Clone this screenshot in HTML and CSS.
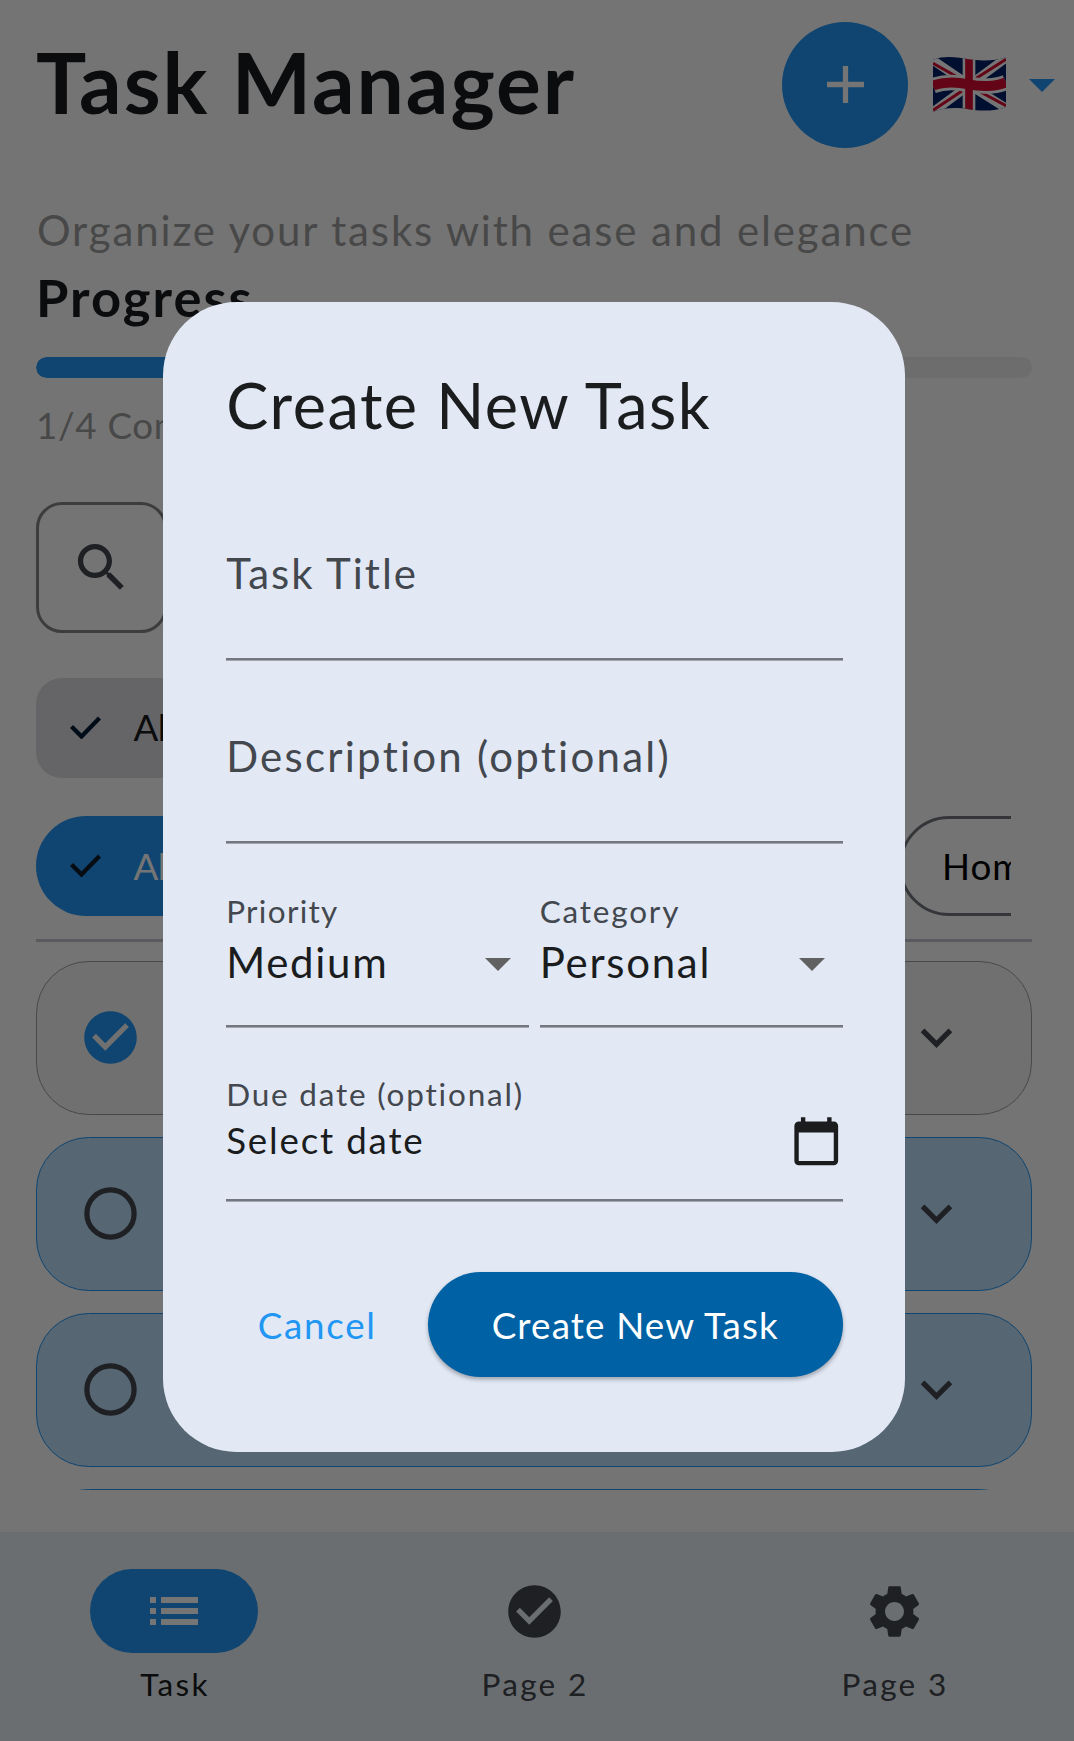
FILE: index.html
```html
<!DOCTYPE html>
<html lang="en">
<head>
<meta charset="utf-8">
<title>Task Manager</title>
<link rel="stylesheet" href="styles.css">
</head>
<body>
<div class="app">
  <header class="header">
    <h1 class="app-title">Task Manager</h1>
    <button class="fab" aria-label="Add task">
      <svg width="37" height="37" viewBox="0 0 14 14"><path d="M6 0h2v6h6v2H8v6H6V8H0V6h6z" fill="#fff"/></svg>
    </button>
    <svg class="flag" width="73" height="55" viewBox="53 36 219 165">
      <defs><clipPath id="wave"><path d="M53 44C90 30 130 38 160 43S240 49 272 37V186C240 200 190 198 160 193S90 186 53 201Z"/></clipPath></defs>
      <g clip-path="url(#wave)" fill="none">
        <rect x="53" y="30" width="219" height="175" fill="#012169"/>
        <path d="M50 44L162 120L276 192M276 36L162 120L50 203" stroke="#fff" stroke-width="27"/>
        <path d="M53 55L142 105M272 43L178 103M53 196L140 138M272 182L190 138" stroke="#d80d33" stroke-width="9"/>
        <path d="M53 122C90 108 130 112 160 118S240 127 272 112" stroke="#fff" stroke-width="47"/>
        <path d="M161 30V205" stroke="#fff" stroke-width="38"/>
        <path d="M53 122C90 108 130 112 160 118S240 127 272 112" stroke="#d80d33" stroke-width="30"/>
        <path d="M161 30V205" stroke="#d80d33" stroke-width="23"/>
      </g>
    </svg>
    <svg class="lang-arrow" width="26" height="13" viewBox="0 0 10 5"><path d="M0 0l5 5 5-5z" fill="#2196f3"/></svg>
  </header>

  <main class="main">
    <p class="subtitle">Organize your tasks with ease and elegance</p>
    <h2 class="progress-title">Progress</h2>
    <div class="track"><div class="track-fill" style="width:25%"></div></div>
    <p class="progress-note">1/4 Completed</p>
    <div class="search">
      <svg width="63" height="63" viewBox="0 0 24 24" fill="#43474e"><path d="M15.5 14h-.79l-.28-.27C15.41 12.59 16 11.11 16 9.5 16 5.91 13.09 3 9.5 3S3 5.91 3 9.5 5.91 16 9.5 16c1.61 0 3.09-.59 4.23-1.57l.27.28v.79l5 4.99L20.49 19l-4.99-5zm-6 0C7.01 14 5 11.99 5 9.5S7.01 5 9.5 5 14 7.01 14 9.5 11.99 14 9.5 14z"/></svg>
    </div>
    <div class="chips chips-status">
      <div class="chip chip-soft">
        <svg width="31" height="23" viewBox="0 0 31 23"><path d="M1.5 10.5L11.5 20.5L29.5 2" fill="none" stroke="#001d36" stroke-width="4.3"/></svg>
        <span>All</span>
      </div>
    </div>
    <div class="chips chips-category">
      <div class="chip chip-active">
        <svg width="31" height="23" viewBox="0 0 31 23"><path d="M1.5 10.5L11.5 20.5L29.5 2" fill="none" stroke="#101c2b" stroke-width="4.3"/></svg>
        <span>All</span>
      </div>
      <div class="chip chip-outline"><span>Home</span></div>
    </div>
    <hr class="divider">
    <ul class="tasks">
      <li class="task task-done">
        <svg width="63" height="63" viewBox="0 0 24 24" fill="#2196f3"><path d="M12 2C6.48 2 2 6.48 2 12s4.48 10 10 10 10-4.48 10-10S17.52 2 12 2zm-2 15l-5-5 1.41-1.41L10 14.17l7.59-7.59L19 8l-9 9z"/></svg>
        <svg width="63" height="63" viewBox="0 0 24 24" fill="#43474e"><path d="M16.59 8.59L12 13.17 7.41 8.59 6 10l6 6 6-6z"/></svg>
      </li>
      <li class="task">
        <svg width="63" height="63" viewBox="0 0 24 24"><circle cx="12" cy="12" r="9" fill="none" stroke="#43474e" stroke-width="2"/></svg>
        <svg width="63" height="63" viewBox="0 0 24 24" fill="#43474e"><path d="M16.59 8.59L12 13.17 7.41 8.59 6 10l6 6 6-6z"/></svg>
      </li>
      <li class="task">
        <svg width="63" height="63" viewBox="0 0 24 24"><circle cx="12" cy="12" r="9" fill="none" stroke="#43474e" stroke-width="2"/></svg>
        <svg width="63" height="63" viewBox="0 0 24 24" fill="#43474e"><path d="M16.59 8.59L12 13.17 7.41 8.59 6 10l6 6 6-6z"/></svg>
      </li>
      <li class="task"></li>
    </ul>
  </main>

  <nav class="nav">
    <a class="nav-item nav-current">
      <span class="nav-icon"><svg width="48" height="28" viewBox="0 0 48 28" fill="#fff"><path d="M0 0h6v6H0zM11 0h37v6H11zM0 11h6v6H0zM11 11h37v6H11zM0 22h6v6H0zM11 22h37v6H11z"/></svg></span>
      <span class="nav-label">Task</span>
    </a>
    <a class="nav-item">
      <span class="nav-icon"><svg width="63" height="63" viewBox="0 0 24 24" fill="#43474e"><path d="M12 2C6.48 2 2 6.48 2 12s4.48 10 10 10 10-4.48 10-10S17.52 2 12 2zm-2 15l-5-5 1.41-1.41L10 14.17l7.59-7.59L19 8l-9 9z"/></svg></span>
      <span class="nav-label">Page 2</span>
    </a>
    <a class="nav-item">
      <span class="nav-icon"><svg width="63" height="63" viewBox="0 0 24 24" fill="#43474e"><path d="M19.14 12.94c.04-.3.06-.61.06-.94 0-.32-.02-.64-.07-.94l2.03-1.58c.18-.14.23-.41.12-.61l-1.92-3.32c-.12-.22-.37-.29-.59-.22l-2.39.96c-.5-.38-1.03-.7-1.62-.94l-.36-2.54c-.04-.24-.24-.41-.48-.41h-3.84c-.24 0-.43.17-.47.41l-.36 2.54c-.59.24-1.13.57-1.62.94l-2.39-.96c-.22-.08-.47 0-.59.22L2.74 8.87c-.12.21-.08.47.12.61l2.03 1.58c-.05.3-.09.63-.09.94s.02.64.07.94l-2.03 1.58c-.18.14-.23.41-.12.61l1.92 3.32c.12.22.37.29.59.22l2.39-.96c.5.38 1.03.7 1.62.94l.36 2.54c.05.24.24.41.48.41h3.84c.24 0 .44-.17.47-.41l.36-2.54c.59-.24 1.13-.56 1.62-.94l2.39.96c.22.08.47 0 .59-.22l1.92-3.32c.12-.22.07-.47-.12-.61l-2.01-1.58zM12 15.6c-1.98 0-3.6-1.62-3.6-3.6s1.62-3.6 3.6-3.6 3.6 1.62 3.6 3.6-1.62 3.6-3.6 3.6z"/></svg></span>
      <span class="nav-label">Page 3</span>
    </a>
  </nav>
</div>

<div class="scrim">
  <section class="dialog" role="dialog" aria-modal="true">
    <h2 class="dialog-title">Create New Task</h2>
    <div class="field field-empty"><span class="placeholder">Task Title</span></div>
    <div class="field field-empty"><span class="placeholder placeholder-long">Description (optional)</span></div>
    <div class="field-row">
      <div class="field field-select">
        <span class="label label-priority">Priority</span>
        <div class="value"><span class="value-text">Medium</span><svg width="26" height="13" viewBox="0 0 10 5"><path d="M0 0l5 5 5-5z" fill="#616161"/></svg></div>
      </div>
      <div class="field field-select">
        <span class="label">Category</span>
        <div class="value"><span class="value-text">Personal</span><svg width="26" height="13" viewBox="0 0 10 5"><path d="M0 0l5 5 5-5z" fill="#616161"/></svg></div>
      </div>
    </div>
    <div class="field field-date">
      <div class="date-text">
        <span class="label">Due date (optional)</span>
        <span class="date-value">Select date</span>
      </div>
      <svg width="52.5" height="52.5" viewBox="0 0 24 24" fill="#1a1c1e"><path d="M20 3h-1V1h-2v2H7V1H5v2H4c-1.1 0-2 .9-2 2v16c0 1.1.9 2 2 2h16c1.1 0 2-.9 2-2V5c0-1.1-.9-2-2-2zm0 18H4V8h16v13z"/></svg>
    </div>
    <div class="actions">
      <button class="btn btn-text">Cancel</button>
      <button class="btn btn-filled">Create New Task</button>
    </div>
  </section>
</div>
</body>
</html>
```
FILE: styles.css
```css
* { box-sizing: border-box; margin: 0; padding: 0; }

body {
  width: 1074px;
  height: 1741px;
  overflow: hidden;
  position: relative;
  background: #fdfdfd;
  color: #191c20;
  font-family: Lato, "Open Sans", sans-serif;
}

svg { display: block; flex: none; }
button { border: 0; font: inherit; }

.app { height: 1741px; display: flex; flex-direction: column; }

/* Header */
.header {
  width: 1068px;
  height: 169px;
  padding: 0 13px 0 36px;
  display: flex;
  align-items: center;
}
.app-title {
  flex: 1;
  padding-bottom: 5px;
  font-size: 84px;
  line-height: 100px;
  font-weight: 700;
  letter-spacing: 1.95px;
}
.fab {
  width: 126px;
  height: 126px;
  border-radius: 50%;
  background: #2196f3;
  display: grid;
  place-items: center;
  margin-right: 24.5px;
}
.flag { margin-right: 23.5px; }
.lang-arrow { margin-top: 2px; }

/* Main column */
.main {
  width: 1068px;
  height: 1363px;
  padding: 34px 36px 0;
  display: flex;
  flex-direction: column;
}
.subtitle { font-size: 42px; line-height: 55px; letter-spacing: 1.86px; color: #9e9e9e; padding-left: 1px; }
.progress-title { margin-top: 6px; font-size: 52.5px; line-height: 66px; font-weight: 700; letter-spacing: 2px; }
.track { margin-top: 27px; height: 21px; flex: none; border-radius: 10.5px; background: #eeeeee; overflow: hidden; }
.track-fill { height: 100%; border-radius: 10.5px; background: #2196f3; }
.progress-note { margin-top: 23px; font-size: 36.75px; line-height: 48px; letter-spacing: 0.7px; color: #9e9e9e; }

.search {
  margin-top: 53px;
  width: 131px;
  height: 131px;
  flex: none;
  border: 3px solid #858585;
  border-radius: 26px;
  padding: 31px;
}

.chips { display: flex; flex: none; height: 100px; width: 975px; overflow: hidden; }
.chips-status { margin-top: 44.5px; }
.chips-category { margin-top: 38.5px; }
.chip {
  flex: none;
  height: 100px;
  display: flex;
  align-items: center;
  gap: 32.5px;
  padding: 0 44px 1px 34px;
  font-size: 36.75px;
  letter-spacing: 1px;
  line-height: 44px;
}
.chip-soft { width: 220px; border-radius: 26px; background: #dcdce1; letter-spacing: -0.6px; }
.chip-active { width: 220px; border-radius: 50px; background: #2196f3; color: #fff; margin-right: 643px; letter-spacing: -0.6px; }
.chip-outline { width: 190px; border-radius: 50px; border: 3px solid #73777f; color: #000; padding-left: 40px; }

.divider { margin-top: 22.5px; border: 0; height: 3px; flex: none; background: #c3c6cf; }

.tasks {
  margin-top: 19px;
  height: 529px;
  flex: none;
  overflow: hidden;
  list-style: none;
  display: flex;
  flex-direction: column;
  gap: 21.5px;
}
.task {
  flex: none;
  height: 154.5px;
  border: 1.3px solid #2196f3;
  border-radius: 52.5px;
  background: #bbdefb;
  padding: 0 63px 0 42px;
  display: flex;
  align-items: center;
  justify-content: space-between;
}
.task-done { background: #f4f4f4; border-color: #9e9e9e; }

/* Bottom navigation */
.nav {
  height: 209px;
  padding: 37px 6px 0 0;
  background: #e7eff5;
  display: grid;
  grid-template-columns: repeat(3, 360px);
  justify-content: center;
}
.nav-item { display: flex; flex-direction: column; align-items: center; gap: 10.5px; color: #43474e; }
.nav-icon { width: 168px; height: 84px; border-radius: 42px; display: grid; place-items: center; }
.nav-label { font-size: 31.5px; line-height: 40px; letter-spacing: 2.3px; padding-left: 2px; }
.nav-current { color: #191c20; }
.nav-current .nav-icon { background: #2196f3; }

/* Dialog */
.scrim {
  position: absolute;
  inset: 0;
  background: rgba(0, 0, 0, 0.54);
  padding: 301.5px 0 0 162.7px;
}
.dialog {
  width: 742.6px;
  height: 1150px;
  padding: 61px 62.5px 0 63.5px;
  border-radius: 73.5px;
  background: #e2e9f5;
  color: #1a1c1e;
}
.dialog-title { font-size: 63px; line-height: 84px; font-weight: 400; letter-spacing: 1.5px; margin-bottom: 54.5px; }

.field {
  display: flex;
  flex-direction: column;
  background: linear-gradient(#73777f, #73777f) left bottom / 100% 2.6px no-repeat;
}
.field-empty { height: 159.5px; padding-top: 45.5px; margin-bottom: 24px; }
.placeholder { font-size: 42px; line-height: 52px; letter-spacing: 2px; color: #43474e; }
.placeholder-long { letter-spacing: 2.25px; }
.field-row { display: grid; grid-template-columns: 1fr 1fr; gap: 10.5px; }
.field-select { height: 160px; padding-top: 23px; gap: 4.5px; }
.label { font-size: 31.5px; line-height: 40px; letter-spacing: 1.8px; color: #43474e; }
.label-priority { letter-spacing: 1.3px; }
.value { display: flex; justify-content: space-between; align-items: center; padding-right: 18px; }
.value-text { font-size: 42px; line-height: 52px; letter-spacing: 1.7px; }
.value svg { margin-top: 6px; }
.field-date {
  height: 149.5px;
  margin-top: 24px;
  padding-top: 22px;
  flex-direction: row;
  justify-content: space-between;
}
.date-text { display: flex; flex-direction: column; }
.date-value { font-size: 36.75px; line-height: 53px; letter-spacing: 1.8px; }
.field-date svg { margin-top: 41px; }

.actions { margin-top: 70.5px; display: flex; gap: 21px; justify-content: flex-end; }
.btn { height: 105px; border-radius: 52.5px; font-size: 36.75px; text-align: center; padding-top: 1px; }
.btn-text { width: 179px; background: none; color: #2196f3; letter-spacing: 1.7px; }
.btn-filled {
  width: 415px;
  background: #0061a4;
  color: #fff;
  letter-spacing: 1.15px;
  box-shadow: 0 2.6px 4px rgba(0, 0, 0, 0.3);
}
```
